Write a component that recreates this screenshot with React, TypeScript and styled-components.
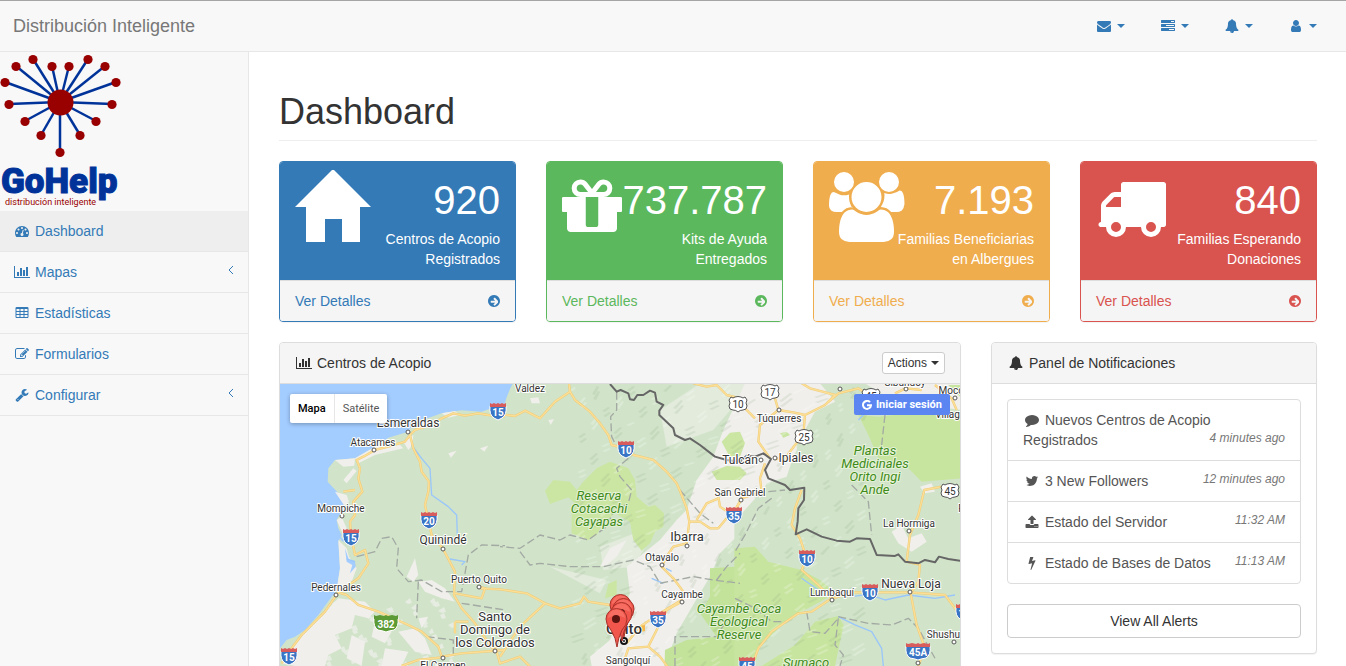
import React from 'react';
import styled, { createGlobalStyle } from 'styled-components';

const GlobalStyle = createGlobalStyle`
  *, *::before, *::after { box-sizing: border-box; }
  body {
    margin: 0;
    background: #f8f8f8;
    color: #333;
    font-family: "Liberation Sans", Arial, sans-serif;
    font-size: 14px;
    line-height: 20px;
  }
  a { color: #337ab7; text-decoration: none; }
  button { font-family: inherit; cursor: pointer; }
`;

/* ---------- icons ---------- */

const cell = 'q0-14-9-23t-23-9h-320q-14 0-23 9t-9 23v192q0 14 9 23t23 9h320q14 0 23-9t9-23z';
const tableCells = [576, 1088, 1600]
  .flatMap((x) => [608, 992, 1376].map((y) => `M${x} ${y}v-192${cell}`))
  .join('');
const taskBar = 'v256q0 26-19 45t-45 19h-1664q-26 0-45-19t-19-45v-256q0-26 19-45t45-19h1664q26 0 45 19t19 45z';

const icons = {
  envelope: 'M1792 710v794q0 66-47 113t-113 47h-1472q-66 0-113-47t-47-113v-794q44 49 101 87 362 246 497 345 57 42 92.500 65.500t94.500 48 110 24.500h2q51 0 110-24.500t94.500-48 92.500-65.500q170-123 498-345 57-39 100-87zm0-294q0 79-49 151t-122 123q-376 261-468 325-10 7-42.500 31t-54 38.500-52 32.500-57.500 27-50 9h-2q-23 0-50-9t-57.500-27-52-32.500-54-38.500-42.500-31q-91-64-262-182.500t-205-142.500q-62-42-117-115.500t-55-136.500q0-78 41.500-130t118.500-52h1472q65 0 112.500 47t47.500 113z',
  tasks: `M1024 1408h640v-128h-640v128zm-384-512h1024v-128h-1024v128zm640-512h384v-128h-384v128zM1792 1216${taskBar}M1792 704${taskBar}M1792 192${taskBar}`,
  bell: 'M912 1696q0-16-16-16-59 0-101.500-42.500t-42.500-101.500q0-16-16-16t-16 16q0 73 51.500 124.500t124.500 51.500q16 0 16-16zm816-288q0 52-38 90t-90 38h-448q0 106-75 181t-181 75-181-75-75-181h-448q-52 0-90-38t-38-90q50-42 91-88t85-119.500 74.500-158.500 50-206 19.500-260q0-152 117-282.500t307-158.500q-8-19-8-39 0-40 28-68t68-28 68 28 28 68q0 20-8 39 190 28 307 158.500t117 282.500q0 139 19.500 260t50 206 74.500 158.500 85 119.500 91 88z',
  user: 'M1536 1399q0 109-62.500 187t-150.500 78h-854q-88 0-150.500-78t-62.500-187q0-85 8.500-160.500t31.500-152 58.500-131 94-89 134.500-34.500q131 128 313 128t313-128q76 0 134.500 34.500t94 89 58.500 131 31.500 152 8.500 160.500zm-256-887q0 159-112.500 271.500t-271.500 112.500-271.500-112.500-112.500-271.500 112.500-271.500 271.500-112.500 271.500 112.500 112.500 271.500z',
  dashboard: 'M384 1152q0-53-37.500-90.500t-90.500-37.500-90.500 37.500-37.500 90.500 37.500 90.500 90.500 37.500 90.500-37.500 37.500-90.500zm192-448q0-53-37.500-90.500t-90.500-37.500-90.500 37.500-37.500 90.500 37.500 90.500 90.500 37.500 90.500-37.500 37.500-90.500zm428 481l101-382q6-26-7.500-48.500t-38.500-29.500-48 6.500-30 39.500l-101 382q-60 5-107 43.500t-63 98.500q-20 77 20 146t117 89 146-20 89-117q16-60-6-117t-72-91zm660-33q0-53-37.500-90.500t-90.500-37.500-90.500 37.500-37.500 90.500 37.500 90.500 90.500 37.500 90.500-37.500 37.500-90.500zm-640-640q0-53-37.500-90.500t-90.500-37.500-90.500 37.500-37.500 90.500 37.500 90.500 90.500 37.500 90.500-37.500 37.500-90.500zm448 192q0-53-37.500-90.500t-90.500-37.500-90.500 37.500-37.500 90.500 37.500 90.500 90.500 37.500 90.500-37.500 37.500-90.500zm320 448q0 261-141 483-19 29-54 29h-1402q-35 0-54-29-141-221-141-483 0-182 71-348t191-286 286-191 348-71 348 71 286 191 191 286 71 348z',
  barChart: 'M640 896v512h-256v-512h256zm384-512v1024h-256v-1024h256zm1024 1152v128h-2048v-1536h128v1408h1920zm-640-896v768h-256v-768h256zm384-384v1152h-256v-1152h256z',
  table: `${tableCells}M1728 288v1088q0 66-47 113t-113 47h-1344q-66 0-113-47t-47-113v-1088q0-66 47-113t113-47h1344q66 0 113 47t47 113z`,
  edit: 'M888 1184l116-116-152-152-116 116v56h96v96h56zm440-720q-16-16-33 1l-350 350q-17 17-1 33t33-1l350-350q17-17 1-33zm80 594v190q0 119-84.500 203.500t-203.500 84.500h-832q-119 0-203.500-84.500t-84.500-203.500v-832q0-119 84.500-203.500t203.500-84.500h832q63 0 117 25 15 7 18 23 3 17-9 29l-49 49q-14 14-32 8-23-6-45-6h-832q-66 0-113 47t-47 113v832q0 66 47 113t113 47h832q66 0 113-47t47-113v-126q0-13 9-22l64-64q15-15 35-7t20 29zm-96-738l288 288-672 672h-288v-288zm444 132l-92 92-288-288 92-92q28-28 68-28t68 28l152 152q28 28 28 68t-28 68z',
  wrench: 'M448 1472q0-26-19-45t-45-19-45 19-19 45 19 45 45 19 45-19 19-45zm644-420l-682 682q-37 37-90 37-52 0-91-37l-106-108q-38-36-38-90 0-53 38-91l681-681q39 98 114.500 173.500t173.500 114.500zm634-435q0 39-23 106-47 134-164.500 217.500t-258.500 83.500q-185 0-316.500-131.500t-131.500-316.500 131.500-316.500 316.500-131.500q58 0 121.500 16.500t107.500 46.500q16 11 16 28t-16 28l-293 169v224l193 107q5-3 79-48.500t135.500-81 70.500-35.500q15 0 23.500 10t8.500 25z',
  arrow: 'M1413 896q0-27-18-45l-91-91-271-271q-18-18-45-18t-45 18l-91 91q-18 18-18 45t18 45l189 189h-502q-26 0-45 19t-19 45v128q0 26 19 45t45 19h502l-189 189q-18 18-18 45t18 45l91 91q18 18 45 18t45-18l271-271 91-91q18-18 18-45zM1664 896q0 209-103 385.500t-279.500 279.500-385.500 103-385.500-103-279.500-279.500-103-385.500 103-385.500 279.500-279.500 385.500-103 385.500 103 279.500 279.500 103 385.500z',
  comment: 'M1792 896q0 174-120 321.500t-326 233-450 85.500q-70 0-145-8-198 175-460 242-49 14-114 22-17 2-30.500-9t-17.500-29v-1q-3-4-.5-12t2-10 4.500-9.500l6-9 7-8.500 8-9q7-8 31-34.500t34.500-38 31-39.500 32.500-51 27-59 26-76q-157-89-247.500-220t-90.500-281q0-130 71-248.500t191-204.500 286-136.500 348-50.500q244 0 450 85.500t326 233 120 321.500z',
  twitter: 'M1684 408q-67 98-162 167 1 14 1 42 0 130-38 259.500t-115.500 248.500-184.500 210.500-258 146-323 54.500q-271 0-496-145 35 4 78 4 225 0 401-138-105-2-188-64.500t-114-159.500q33 5 61 5 43 0 85-11-112-23-185.500-111.500t-73.500-205.500v-4q68 38 146 41-66-44-105-115t-39-154q0-88 44-163 121 149 294.500 238.500t371.500 99.500q-8-38-8-74 0-134 94.500-228.500t228.500-94.500q140 0 236 102 109-21 205-78-37 115-142 178 93-10 186-50z',
  upload: 'M1344 1472q0-26-19-45t-45-19-45 19-19 45 19 45 45 19 45-19 19-45zm256 0q0-26-19-45t-45-19-45 19-19 45 19 45 45 19 45-19 19-45zm128-224v320q0 40-28 68t-68 28h-1472q-40 0-68-28t-28-68v-320q0-40 28-68t68-28h427q21 56 70.500 92t110.500 36h256q61 0 110.500-36t70.500-92h427q40 0 68 28t28 68zm-325-648q-17 40-59 40h-256v448q0 26-19 45t-45 19h-256q-26 0-45-19t-19-45v-448h-256q-42 0-59-40-17-39 14-69l448-448q18-19 45-19t45 19l448 448q31 30 14 69z',
  bolt: 'M1333 566q18 20 7 44l-540 1157q-13 25-42 25-4 0-14-2-17-5-25.500-19t-4.500-30l197-808-406 101q-4 1-12 1-18 0-31-11-18-15-13-39l201-825q4-14 16-23t28-9h328q19 0 32 12.500t13 29.500q0 8-5 18l-171 463 396-98q8-2 12-2 19 0 34 15z',
};

type IconName = keyof typeof icons;

const IconSvg = styled.svg`
  width: 18px;
  height: 14px;
  vertical-align: -2px;
  fill: currentColor;
  flex: none;
`;

const Icon = ({ name }: { name: IconName }) => (
  <IconSvg viewBox={name === 'barChart' ? '0 0 2048 1792' : '0 0 1792 1792'} aria-hidden="true">
    <path fillRule={name === 'table' ? 'evenodd' : undefined} d={icons[name]} />
  </IconSvg>
);

const ArrowSvg = styled(IconSvg)`
  width: 12px;
`;

const Caret = styled.span`
  display: inline-block;
  border: 4px solid transparent;
  border-top-color: currentColor;
  border-bottom: 0;
  vertical-align: middle;
`;

const ChevronSvg = styled.svg`
  width: 6px;
  height: 10px;
  margin-bottom: 4px;
  fill: none;
  stroke: currentColor;
`;

/* ---------- top bar ---------- */

const TopBar = styled.header`
  display: flex;
  align-items: center;
  justify-content: space-between;
  height: 52px;
  padding: 0 14px 0 13px;
  background: #f8f8f8;
  border-top: 1px solid #a5a5a5;
  border-bottom: 1px solid #e7e7e7;
`;

const Brand = styled.a`
  color: #777;
  font-size: 18px;
`;

const TopLinks = styled.nav`
  display: flex;
  gap: 4px;
`;

const TopLink = styled.a`
  display: flex;
  align-items: center;
  gap: 4px;
  height: 50px;
  padding: 0 15px;
`;

/* ---------- shell ---------- */

const Page = styled.div`
  display: flex;
  flex-direction: column;
  height: 100vh;
  overflow: hidden;
`;

const Columns = styled.div`
  display: flex;
  flex: 1;
  min-height: 0;
`;

const Sidebar = styled.aside`
  flex: none;
  width: 249px;
  border-right: 1px solid #e7e7e7;
`;

const LogoSvg = styled.svg`
  display: block;
  width: 124px;
  height: 159px;
`;

const SideLink = styled.a<{ $active?: boolean }>`
  display: flex;
  align-items: center;
  gap: 4px;
  height: 41px;
  padding: 0 14px 0 13px;
  border-bottom: 1px solid #e7e7e7;
  background: ${(p) => (p.$active ? '#eee' : 'transparent')};
`;

const SideLabel = styled.span`
  flex: 1;
`;

const Main = styled.main`
  flex: 1;
  min-width: 0;
  padding: 0 29px 0 30px;
  background: #fff;
  overflow: hidden;
`;

const Title = styled.h1`
  margin: 40px 0 20px;
  padding-bottom: 9px;
  border-bottom: 1px solid #eee;
  font-size: 36px;
  font-weight: 400;
  line-height: 39px;
`;

/* ---------- figures ---------- */

const Stats = styled.section`
  display: grid;
  grid-template-columns: repeat(4, 1fr);
  gap: 30px;
  margin-bottom: 20px;
`;

const StatCard = styled.article<{ $color: string }>`
  border: 1px solid ${(p) => p.$color};
  border-radius: 4px;
  color: ${(p) => p.$color};
  overflow: hidden;
  box-shadow: 0 1px 1px rgba(0, 0, 0, 0.05);
`;

const StatHead = styled.div<{ $color: string }>`
  display: grid;
  grid-template-columns: 60px 1fr;
  height: 118px;
  padding: 10px 15px;
  background: ${(p) => p.$color};
  color: #fff;
  text-align: right;
`;

const StatIcon = styled.svg`
  height: 70px;
  fill: currentColor;
  overflow: visible;
`;

const StatNumber = styled.div`
  font-size: 40px;
  line-height: 57px;
`;

const StatLink = styled.a`
  display: flex;
  align-items: center;
  justify-content: space-between;
  height: 41px;
  padding: 0 15px;
  border-top: 1px solid #ddd;
  background: #f5f5f5;
  color: inherit;
`;

/* ---------- panels ---------- */

const PanelRow = styled.div`
  display: grid;
  grid-template-columns: 2fr 1fr;
  align-items: start;
  margin: 0 -15px;
`;

const Panel = styled.section`
  min-width: 0;
  margin: 0 15px;
  border: 1px solid #ddd;
  border-radius: 4px;
  background: #fff;
  box-shadow: 0 1px 1px rgba(0, 0, 0, 0.05);
`;

const PanelHead = styled.div`
  display: flex;
  align-items: center;
  gap: 4px;
  height: 41px;
  padding: 0 15px;
  border-bottom: 1px solid #ddd;
  border-radius: 3px 3px 0 0;
  background: #f5f5f5;
`;

const PanelTitle = styled.h2`
  flex: 1;
  margin: 0;
  font-size: 14px;
  font-weight: 400;
`;

const ActionsButton = styled.button`
  display: flex;
  align-items: center;
  gap: 4px;
  height: 22px;
  padding: 0 5px;
  border: 1px solid #ccc;
  border-radius: 3px;
  background: #fff;
  color: #333;
  font-size: 12px;
`;

const PanelBody = styled.div`
  padding: 15px;
`;

const Notices = styled.ul`
  margin: 0 0 20px;
  padding: 0;
  border: 1px solid #ddd;
  border-radius: 4px;
  list-style: none;
`;

const Notice = styled.li`
  & + & { border-top: 1px solid #ddd; }
`;

const NoticeLink = styled.a`
  display: flow-root;
  padding: 10px 15px;
  color: #555;
`;

const NoticeTime = styled.em`
  float: right;
  color: #777;
  font-size: 12px;
  line-height: 16px;
`;

const AlertsButton = styled.button`
  display: block;
  width: 100%;
  height: 34px;
  border: 1px solid #ccc;
  border-radius: 4px;
  background: #fff;
  color: #333;
  font-size: 14px;
`;

/* ---------- map ---------- */

const MapArea = styled.div`
  position: relative;
  height: 400px;
  overflow: hidden;
  font-family: Roboto, "Liberation Sans", sans-serif;
`;

const MapSvg = styled.svg`
  display: block;
  width: 100%;
  height: 100%;
`;

const MapTypes = styled.div`
  position: absolute;
  top: 10px;
  left: 10px;
  display: flex;
  border-radius: 2px;
  background: #fff;
  box-shadow: 0 1px 4px rgba(0, 0, 0, 0.3);
`;

const MapType = styled.button<{ $selected?: boolean }>`
  height: 29px;
  padding: 0 8px;
  border: 0;
  background: none;
  color: ${(p) => (p.$selected ? '#000' : '#565656')};
  font-size: 11px;
  font-weight: ${(p) => (p.$selected ? 500 : 400)};
  & + & { border-left: 1px solid #e6e6e6; }
`;

const SignIn = styled.button`
  position: absolute;
  top: 10px;
  right: 10px;
  display: flex;
  align-items: center;
  gap: 4px;
  height: 21px;
  padding: 0 8px;
  border: 0;
  border-radius: 2px;
  background: #5b86f2;
  color: #fff;
  font-size: 11px;
  font-weight: 700;
`;

/* Survey sheets: every sheet holds its lines at three units to a map unit. */
const sheets = {
  west: 'translate(275 335) scale(0.3333)',
  centre: 'translate(500 380) scale(0.3333)',
  east: 'translate(735 335) scale(0.3333)',
};
type Sheet = keyof typeof sheets;

const shapes: [Sheet, string, string][] = [
  ['west', '#a3ccff', 'M0 130L722 130L706 160L694 190L690 205L620 230L560 226L500 235L415 265L400 290L340 308L300 335L240 370L180 375L160 400L158 440L195 480L208 512L185 555L190 580L200 600L190 620L195 700L185 765L130 840L90 885L60 905L35 915L15 940L0 945Z'],
  ['west', '#f0efeb', 'M190 615L215 640L222 665L245 700L232 735L200 765L185 765L195 700ZM180 375L240 370L238 392L205 395ZM180 470L215 480L222 500L208 512ZM185 555L200 545L215 580L205 600ZM240 370L300 335L370 325L385 340L300 360L250 385ZM385 320L415 300L412 330L400 345ZM415 265L440 255L470 262L430 285ZM500 235L540 228L555 240L520 248Z'],
  ['west', '#a3ccff', 'M210 640L222 675L240 678L242 695L225 715L232 690L215 680ZM190 600L220 625L200 618Z'],
  ['west', '#f0efeb', 'M190 790L270 800L300 830L280 850L240 840L230 880L180 900L200 940L160 960L150 993L60 993L20 985L50 940L110 870ZM300 860L350 890L330 925L290 905ZM230 900L270 920L260 993L215 970ZM330 940L400 950L380 993L320 993ZM395 725L420 670L430 720L415 740ZM430 740L470 735L510 760L540 800L500 790L450 770ZM370 890L420 880L450 910L470 960L420 950ZM430 850L460 845L440 880ZM205 435L235 400L245 408L215 445ZM520 355L545 347L528 368ZM615 340L640 332L628 350Z'],
  ['centre', '#e2ebdc', 'M500 200L640 150L760 10L600 10L480 90ZM300 500L480 430L400 560L310 570ZM150 560L320 600L300 640Z'],
  ['centre', '#f0efeb', 'M735 10L960 10L1010 70L930 130L880 230L860 290L800 310L760 400L720 460L660 520L630 590L600 640L530 760L500 840L480 1000L300 1000L270 830L330 780L390 640L380 560L480 480L530 420L560 390L590 300L640 230L670 150ZM145 120L162 118L152 135ZM90 55L115 52L120 70L95 70ZM300 560L330 505L380 480L350 530L320 555Z'],
  ['east', '#f0efeb', 'M390 145L680 145L680 225L560 210L470 195ZM470 590L500 570L520 610L560 595L575 620L530 650L490 625ZM555 455L590 445L600 470L570 475ZM630 400L670 410L650 425Z'],
  ['centre', '#cbe6a3', 'M135 332L160 300L210 305L230 330L250 305L290 265L330 245L385 265L405 300L410 350L445 380L465 375L492 400L490 440L465 455L450 490L425 512L400 480L390 425L345 400L310 430L290 465L265 480L215 460L215 395L225 370L205 352L150 372ZM665 185L690 158L720 155L735 190L720 230L690 232ZM635 275L680 258L720 260L740 280L720 300L650 300ZM325 612L350 600L350 645L315 655Z'],
  ['centre', '#c3e29a', 'M630 565L705 560L705 1000L490 1000L495 810L560 780L650 770L600 700L630 650Z'],
  ['east', '#c8e5a0', 'M-2 640L60 635L100 680L200 705L255 735L285 760L275 790L200 830L150 860L70 940L60 993L-2 993ZM80 993L180 930L240 860L310 843L326 870L300 993ZM370 240L430 245L560 230L600 215L680 250L680 430L560 440L520 400L430 370L400 300ZM135 295L155 290L165 300L145 308ZM640 150L680 150L680 190Z'],
  ['east', '#d1e4c9', 'M240 230L330 185L420 200L350 230L330 260L240 330L190 420L185 330ZM-2 560L70 480L100 560L60 632L-2 636Z'],
];

const roads: [Sheet, string][] = [
  ['west', 'M690 245L640 240L610 235L570 242L535 235L500 250L470 270L420 285L405 300L390 320L340 335L300 345L265 365L245 375L255 400L250 430L262 470L235 500L240 540L225 560L228 600L240 660L270 645L280 685L250 730L190 772L150 830L110 870L80 900L50 940L20 985'],
  ['west', 'M405 300L415 340L435 380L440 410L462 440L460 470L450 510L470 600L503 640L540 710L537 780L560 820L600 865L645 930L660 950'],
  ['west', 'M190 772L215 780L250 810L310 830L400 870L440 890L490 935L500 965L560 955L690 945M380 993L430 975L500 967M205 470L240 465M540 775L620 790L630 760L612 755M540 860L580 860M540 860L540 895'],
  ['centre', 'M0 102L45 108L75 92L120 115L165 65L210 35L207 10M210 35L225 60L270 95L300 130L325 165L335 195L375 205L400 225L460 240L500 275L530 310L545 345L560 385L568 425L560 490L520 500L500 530L485 560L520 595L550 635L545 660L480 700L420 740L380 790'],
  ['centre', 'M568 425L600 425L630 445L655 445L680 415L705 390L725 355M590 420L620 370L655 355M655 350L660 380L690 400M-60 625L0 628L80 640L135 670L180 685L240 670L252 650L265 665L330 675M135 670L60 740L0 830M545 665L500 690L470 750L445 800L385 805L370 850M445 800L480 830L510 870M-20 780L0 850L60 830L100 870M580 10L620 20L650 15L680 45L720 55'],
  ['east', 'M110 155L130 225L75 270L70 320L105 370M130 225L175 232L210 240L270 210L300 180L225 160L200 145M210 240L205 300L180 330L150 370L120 372M90 385L75 430L80 470L20 490L0 530M20 210L60 250M270 210L310 175L370 160L400 180M480 175L512 160L560 165M600 150L650 190L665 225'],
  ['east', 'M200 465L180 520L170 570L195 610L215 670L200 705L250 750L290 790L230 830L190 835L110 890L70 940L50 993M290 792L350 772L525 772L630 780L660 820L680 850M620 455L568 465L550 540L525 600L515 680L555 690L550 740L527 775L545 870L570 940L550 993'],
];

const boundaries: [Sheet, string][] = [
  ['west', 'M245 665L300 650L320 610L350 605L370 640L365 700L400 740L440 735L500 770L560 770L580 660L620 630L690 632M430 740L425 850M560 805L690 825M455 905L535 915L535 960'],
  ['centre', 'M350 35L350 90L332 110L335 170L350 200M385 235L350 265L360 290L395 330L385 370L340 395L320 440L265 480L210 465L180 480L120 465L60 505L0 500M60 515L90 555L120 550L210 560L310 560L400 540L450 560L480 610L580 590L640 600L720 610M525 858L525 770L650 770L680 720M540 330L600 400L640 430M650 600L680 560L720 520'],
  ['east', 'M450 240L440 330M350 450L400 500L410 600M110 490L70 520L30 600L0 650M100 470L150 465M215 830L225 890L270 895L310 850M310 845L400 865L470 870L520 850L550 880L600 970M310 850L300 930L325 960L315 993M0 790L60 820L110 860L150 860'],
];

const rivers: [Sheet, string][] = [
  ['west', 'M410 330L440 370L465 400L470 480L520 515L545 540L547 600M525 672L570 680L560 690M240 680L215 672'],
  ['centre', 'M455 595L490 610M498 565L515 574'],
  ['east', 'M200 730L250 765L350 785L400 778L450 795L520 780L600 790L660 780M310 845L360 870L410 890L440 940L445 993M370 255L385 240'],
];

const frontier: [Sheet, string][] = [
  ['centre', 'M330 12L350 35L362 30L385 40L390 58L402 60L412 45L430 45L450 32L465 38L470 65L490 75L478 92L478 105L520 145L525 165L555 180L570 175L600 195L645 230L680 240L722 245'],
  ['east', 'M15 380L35 362L60 365L85 355L108 372L90 405L100 430L150 450L165 465L208 458L207 495L190 520L188 560L182 598L215 583L260 605L305 617L345 620L365 610L405 612L425 660L480 663L490 658L510 680L550 685L570 675L600 682L612 665L640 672L680 678'],
];

/* Relief: thin slope strokes over the mountain ranges. */
const relief = Array.from({ length: 420 }, (_, i) => {
  const x = 570 + ((i * 137) % 293);
  const y = 390 + ((i * 89) % 287);
  const dx = 4 + ((i * 7) % 9);
  const dy = 3 + ((i * 5) % 6);
  return `M${x} ${y}l${dx} ${-dy}l2 1l${-dx + 1} ${dy}z`;
});
const plots = Array.from({ length: 60 }, (_, i) => {
  const x = 305 + ((i * 53) % 150);
  const y = 600 + ((i * 37) % 66);
  return `M${x} ${y}l${3 + (i % 4)} ${-2 - (i % 3)}l2 5l-4 1z`;
}).join('');

type LabelKind = 'city' | 'large' | 'town' | 'park';
const labels: [string, number, number, LabelKind][] = [
  ['Esmeraldas', 408, 427, 'city'],
  ['Atacames', 373, 446, 'town'],
  ['Valdez', 530, 392, 'town'],
  ['Mompiche', 341, 512, 'town'],
  ['Quinindé', 443, 544, 'city'],
  ['Puerto Quito', 479, 583, 'town'],
  ['Pedernales', 336, 591, 'town'],
  ['Santo', 495, 621, 'large'],
  ['Domingo de', 495, 634, 'large'],
  ['los Colorados', 495, 647, 'large'],
  ['El Carmen', 443, 669, 'town'],
  ['Reserva', 599, 500, 'park'],
  ['Cotacachi', 599, 513, 'park'],
  ['Cayapas', 599, 526, 'park'],
  ['Ibarra', 687, 541, 'large'],
  ['Otavalo', 662, 561, 'town'],
  ['Cayambe', 682, 598, 'town'],
  ['Sangolquí', 628, 664, 'town'],
  ['Tulcán', 740, 464, 'city'],
  ['Ipiales', 796, 462, 'city'],
  ['Túquerres', 779, 422, 'town'],
  ['San Gabriel', 740, 496, 'town'],
  ['Plantas', 875, 455, 'park'],
  ['Medicinales', 875, 468, 'park'],
  ['Orito Ingi', 875, 481, 'park'],
  ['Ande', 875, 494, 'park'],
  ['La Hormiga', 909, 527, 'town'],
  ['Nueva Loja', 911, 588, 'city'],
  ['Lumbaquí', 832, 596, 'town'],
  ['Cayambe Coca', 739, 613, 'park'],
  ['Ecological', 739, 626, 'park'],
  ['Reserve', 739, 639, 'park'],
  ['Sumaco', 806, 667, 'park'],
  ['Shushufindi', 953, 638, 'town'],
  ['Mocoa', 954, 394, 'town'],
  ['Villagarzón', 960, 418, 'town'],
  ['Sibundoy', 905, 386, 'town'],
  ['Puerto', 973, 512, 'town'],
];

const dots = [
  [408, 432], [374, 450], [342, 516], [443, 549], [479, 587], [336, 595], [495, 651], [443, 658],
  [687, 546], [662, 565], [682, 602], [761, 460], [775, 458], [779, 410], [741, 500], [909, 531],
  [910, 592], [832, 600], [954, 642], [955, 398], [840, 389], [906, 389], [918, 663],
];

const highways: [string, number, number, string?][] = [
  ['15', 498, 411], ['15', 351, 537], ['20', 429, 520], ['15', 289, 656], ['10', 626, 449],
  ['35', 734, 515], ['35', 658, 619], ['10', 807, 558], ['10', 870, 592], ['45', 747, 665],
  ['45A', 918, 651], ['10', 964, 612], ['382', 386, 623, '#5c9a35'],
];

const routes: [string, number, number][] = [['10', 738, 404], ['17', 770, 392], ['25', 804, 437], ['45', 950, 491], ['45', 871, 396]];

const pins = [[621, 633], [624, 637], [622, 641], [617, 647]];

const Lines = ({ items, ...rest }: { items: [Sheet, string][] } & React.SVGProps<SVGGElement>) => (
  <g fill="none" strokeLinejoin="round" {...rest}>
    {items.map(([sheet, d]) => <path key={d} transform={sheets[sheet]} d={d} />)}
  </g>
);

const Highway = ({ n, x, y, color = '#3a74c4' }: { n: string; x: number; y: number; color?: string }) => {
  const w = n.length > 2 ? 12 : 8;
  return (
    <g transform={`translate(${x} ${y})`}>
      <path fill={color} stroke="#fff" strokeWidth="1" d={`M${-w} -5H${w}Q${w + 1} 4 ${w - 4} 7Q2 8 0 9Q-2 8 ${4 - w} 7Q${-w - 1} 4 ${-w} -5Z`} />
      <path fill={color === '#3a74c4' ? '#d95c5c' : color} d={`M${-w} -8L${-w + 2} -7L${-w / 2} -8L-2 -7L0 -8L2 -7L${w / 2} -8L${w - 2} -7L${w} -8V-4H${-w}Z`} />
      <text y="5" textAnchor="middle" fontSize="10" fontWeight="700" fill="#fff">{n}</text>
    </g>
  );
};

const Route = ({ n, x, y }: { n: string; x: number; y: number }) => (
  <g transform={`translate(${x} ${y})`}>
    <path fill="#fff" stroke="#555" strokeWidth="1" d="M-7 -7Q-5 -5 -3 -7Q0 -8 3 -7Q5 -5 7 -7L9 -4Q7 -1 9 2Q9 6 5 6Q2 6 0 8Q-2 6 -5 6Q-9 6 -9 2Q-7 -1 -9 -4Z" />
    <text y="4" textAnchor="middle" fontSize="10" fill="#333">{n}</text>
  </g>
);

const labelStyle = {
  city: { fontSize: 12, fill: '#333', stroke: '#fff' },
  large: { fontSize: 13, fill: '#333', stroke: '#fff' },
  town: { fontSize: 10, fill: '#333', stroke: '#fff' },
  park: { fontSize: 13, fill: '#3f8a1a', stroke: '#e6f3d8', fontStyle: 'italic' },
};

const CountryMap = () => (
  <MapSvg viewBox="280 384 680 400" preserveAspectRatio="xMinYMin slice" role="img" aria-label="Mapa de centros de acopio">
    <rect x="280" y="384" width="680" height="400" fill="#d1e4c9" />
    {shapes.map(([sheet, fill, d]) => <path key={d} transform={sheets[sheet]} fill={fill} d={d} />)}
    <path fill="#7e9a78" opacity="0.14" d={relief.filter((_, i) => i % 2).join('')} />
    <path fill="#fff" opacity="0.22" d={relief.filter((_, i) => !(i % 2)).join('')} />
    <path fill="#f0efeb" opacity="0.7" clipPath="url(#inland)" d={plots} />
    <clipPath id="inland"><path d="M340 590L460 590L460 700L285 700L285 660Z" /></clipPath>
    <Lines items={rivers} stroke="#9ac6fa" strokeWidth="4" />
    <Lines items={boundaries} stroke="#a3a9a3" strokeWidth="4" strokeDasharray="24 10" />
    <Lines items={roads} stroke="#f0cb75" strokeWidth="7" />
    <Lines items={roads} stroke="#fcdf97" strokeWidth="4" />
    <Lines items={frontier} stroke="#666" strokeWidth="6" />
    {dots.map(([x, y]) => <circle key={`${x}-${y}`} cx={x} cy={y} r="2" fill="#fff" stroke="#555" />)}
    {labels.map(([text, x, y, kind]) => (
      <text key={text + y} x={x} y={y} textAnchor="middle" strokeWidth="2" paintOrder="stroke" {...labelStyle[kind]}>{text}</text>
    ))}
    {highways.map(([n, x, y, c]) => <Highway key={`${x}-${y}`} n={n} x={x} y={y} color={c} />)}
    {routes.map(([n, x, y]) => <Route key={`${x}-${y}`} n={n} x={x} y={y} />)}
    <path fill="#f5b84e" d="M640 626l5 -1v6l-4 1z" />
    <text x="624" y="634" textAnchor="middle" fontSize="15" fontWeight="500" fill="#333" stroke="#fff" strokeWidth="2" paintOrder="stroke">Quito</text>
    <circle cx="624" cy="641" r="3" fill="#fff" stroke="#111" strokeWidth="2" />
    <circle cx="624" cy="641" r="1" fill="#111" />
    {pins.map(([x, y]) => (
      <g key={y} transform={`translate(${x} ${y})`}>
        <path fill="#f0564b" stroke="#a8322b" strokeWidth="1" d="M0 0Q-1 -9 -6 -17Q-11 -22 -11 -28A10.500 10.500 0 0 1 10 -28Q10 -22 5 -17Q1 -9 0 0Z" />
        <path fill="#ff8478" opacity="0.5" d="M-9 -29A8.500 8.500 0 0 1 8 -29Q0 -34 -9 -29Z" />
        <circle cy="-28" r="4" cx="-1" fill="#5c1410" />
      </g>
    ))}
  </MapSvg>
);

/* ---------- logo ---------- */

const logoNodes = [
  [33, 7], [16, 14], [52, 14], [69, 14], [88, 7], [105, 14], [5, 30], [116, 30],
  [9, 52], [112, 52], [25, 69], [96, 69], [41, 83], [80, 83], [60, 100],
];

const Logo = () => (
  <LogoSvg viewBox="0 0 124 159" role="img" aria-label="GoHelp">
    <g stroke="#003399" strokeWidth="2.500">
      {logoNodes.map(([x, y]) => <line key={`${x}-${y}`} x1="60" y1="50" x2={x} y2={y} />)}
    </g>
    <g fill="#990000">
      <circle cx="60.500" cy="50.500" r="13" />
      {logoNodes.map(([x, y]) => <circle key={`${x}-${y}`} cx={x} cy={y + 0.5} r="4.600" />)}
    </g>
    <text x="1" y="141" fontFamily='Roboto, "Liberation Sans", sans-serif' fontSize="35" fontWeight="900" fill="#003399" stroke="#003399">GoHelp</text>
    <text x="5" y="153" fontFamily='Roboto, "Liberation Sans", sans-serif' fontSize="9" fill="#990000">distribución inteligente</text>
  </LogoSvg>
);

/* ---------- data ---------- */

const topLinks: [IconName, string][] = [['envelope', 'Mensajes'], ['tasks', 'Tareas'], ['bell', 'Alertas'], ['user', 'Usuario']];

const menu: { icon: IconName; label: string; active?: boolean; sub?: boolean }[] = [
  { icon: 'dashboard', label: 'Dashboard', active: true },
  { icon: 'barChart', label: 'Mapas', sub: true },
  { icon: 'table', label: 'Estadísticas' },
  { icon: 'edit', label: 'Formularios' },
  { icon: 'wrench', label: 'Configurar', sub: true },
];

const stats = [
  {
    color: '#337ab7', number: '920', label: 'Centros de Acopio Registrados', viewBox: '0 2 76 70', width: 76,
    path: 'M37 0H39L76 37H65V72H47V49H30V72H11V37H0Z',
  },
  {
    color: '#5cb85c', number: '737.787', label: 'Kits de Ayuda Entregados', viewBox: '128 0 1536 1792', width: 60,
    path: 'M1056 1356v-716h-320v716q0 25 18 38.500t46 13.500h192q28 0 46-13.500t18-38.500zm-456-844h195l-126-161q-26-31-69-31-40 0-68 28t-28 68 28 68 68 28zm688-96q0-40-28-68t-68-28q-43 0-69 31l-125 161h194q40 0 68-28t28-68zm376 256v320q0 14-9 23t-23 9h-96v416q0 40-28 68t-68 28h-1088q-40 0-68-28t-28-68v-416h-96q-14 0-23-9t-9-23v-320q0-14 9-23t23-9h440q-93 0-158.500-65.500t-65.500-158.500 65.500-158.500 158.500-65.500q107 0 168 77l128 165 128-165q61-77 168-77 93 0 158.500 65.500t65.500 158.500-65.500 158.500-158.500 65.500h440q14 0 23 9t9 23z',
  },
  {
    color: '#f0ad4e', number: '7.193', label: 'Familias Beneficiarias en Albergues', viewBox: '64 0 1920 1792', width: 75,
    path: 'M657 896q-162 5-265 128h-134q-82 0-138-40.500t-56-118.500q0-353 124-353 6 0 43.500 21t97.500 42.500 119 21.500q67 0 133-23-5 37-5 66 0 159 93 293zm1071 637q0 120-73 189.500t-194 69.500h-874q-121 0-194-69.500t-73-189.500q0-53 3.500-103.500t14-109 26.500-108.500 43-97.500 62-81 85.500-53.500 111.500-20q10 0 43 21.500t73 48 107 48 135 21.500 135-21.500 107-48 73-48 43-21.500q61 0 111.500 20t85.500 53.500 62 81 43 97.500 26.500 108.500 14 109 3.500 103.500zm-1024-1277q0 106-75 181t-181 75-181-75-75-181 75-181 181-75 181 75 75 181zm704 384q0 159-112.500 271.500t-271.500 112.500-271.500-112.500-112.500-271.500 112.500-271.500 271.500-112.500 271.500 112.500 112.500 271.500zm576 225q0 78-56 118.500t-138 40.500h-134q-103-123-265-128 93-134 93-293 0-29-5-66 66 23 133 23 59 0 119-21.500t97.500-42.500 43.500-21q124 0 124 353zm-128-609q0 106-75 181t-181 75-181-75-75-181 75-181 181-75 181 75 75 181z',
  },
  {
    color: '#d9534f', number: '840', label: 'Familias Esperando Donaciones', viewBox: '0 0 1792 1792', width: 70,
    path: 'M640 1408q0-52-38-90t-90-38-90 38-38 90 38 90 90 38 90-38 38-90zm-384-512h384v-256h-158q-13 0-22 9l-195 195q-9 9-9 22v30zm1280 512q0-52-38-90t-90-38-90 38-38 90 38 90 90 38 90-38 38-90zm256-1088v1024q0 15-4 26.500t-13.500 18.500-16.500 11.500-23.500 6-22.500 2-25.500 0-22.500-.5q0 106-75 181t-181 75-181-75-75-181h-384q0 106-75 181t-181 75-181-75-75-181h-64q-3 0-22.500.5t-25.500 0-22.500-2-23.500-6-16.500-11.500-13.500-18.500-4-26.500q0-26 19-45t45-19v-320q0-8-.5-35t0-38 2.500-34.500 6.500-37 14-30.500 22.500-30l198-198q19-19 50.500-32t58.500-13h160v-192q0-26 19-45t45-19h1024q26 0 45 19t19 45z',
  },
];

const notices: [IconName, string, string][] = [
  ['comment', 'Nuevos Centros de Acopio Registrados', '4 minutes ago'],
  ['twitter', '3 New Followers', '12 minutes ago'],
  ['upload', 'Estado del Servidor', '11:32 AM'],
  ['bolt', 'Estado de Bases de Datos', '11:13 AM'],
];

export default function App() {
  return (
    <Page>
      <GlobalStyle />
      <TopBar>
        <Brand href="#">Distribución Inteligente</Brand>
        <TopLinks>
          {topLinks.map(([icon, label]) => (
            <TopLink key={icon} href="#" aria-label={label}><Icon name={icon} /><Caret /></TopLink>
          ))}
        </TopLinks>
      </TopBar>
      <Columns>
        <Sidebar>
          <Logo />
          <nav>
            {menu.map((m) => (
              <SideLink key={m.label} href="#" $active={m.active}>
                <Icon name={m.icon} />
                <SideLabel>{m.label}</SideLabel>
                {m.sub && <ChevronSvg viewBox="0 0 6 10"><path d="M5 1L1 5L5 9" /></ChevronSvg>}
              </SideLink>
            ))}
          </nav>
        </Sidebar>
        <Main>
          <Title>Dashboard</Title>
          <Stats>
            {stats.map((s) => (
              <StatCard key={s.label} $color={s.color}>
                <StatHead $color={s.color}>
                  <StatIcon viewBox={s.viewBox} width={s.width} aria-hidden="true"><path d={s.path} /></StatIcon>
                  <div>
                    <StatNumber>{s.number}</StatNumber>
                    <div>{s.label}</div>
                  </div>
                </StatHead>
                <StatLink href="#">
                  Ver Detalles
                  <ArrowSvg viewBox="128 0 1536 1792" aria-hidden="true"><path fillRule="evenodd" d={icons.arrow} /></ArrowSvg>
                </StatLink>
              </StatCard>
            ))}
          </Stats>
          <PanelRow>
            <Panel>
              <PanelHead>
                <Icon name="barChart" />
                <PanelTitle>Centros de Acopio</PanelTitle>
                <ActionsButton type="button">Actions <Caret /></ActionsButton>
              </PanelHead>
              <MapArea>
                <CountryMap />
                <MapTypes>
                  <MapType type="button" $selected>Mapa</MapType>
                  <MapType type="button">Satélite</MapType>
                </MapTypes>
                <SignIn type="button">
                  <svg width="10" height="10" viewBox="0 0 10 10" fill="none" stroke="#fff" strokeWidth="2" aria-hidden="true">
                    <path d="M8 2.200A4 4 0 1 0 9 5.300H5" />
                  </svg>
                  Iniciar sesión
                </SignIn>
              </MapArea>
            </Panel>
            <Panel>
              <PanelHead>
                <Icon name="bell" />
                <PanelTitle>Panel de Notificaciones</PanelTitle>
              </PanelHead>
              <PanelBody>
                <Notices>
                  {notices.map(([icon, text, time]) => (
                    <Notice key={text}>
                      <NoticeLink href="#">
                        <Icon name={icon} /> {text}
                        <NoticeTime>{time}</NoticeTime>
                      </NoticeLink>
                    </Notice>
                  ))}
                </Notices>
                <AlertsButton type="button">View All Alerts</AlertsButton>
              </PanelBody>
            </Panel>
          </PanelRow>
        </Main>
      </Columns>
    </Page>
  );
}
